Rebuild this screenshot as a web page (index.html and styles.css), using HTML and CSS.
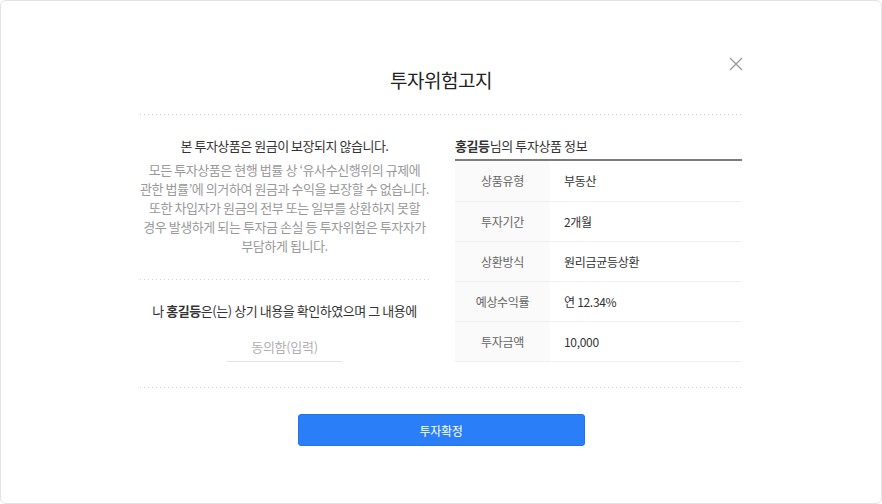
FILE: index.html
```html
<!DOCTYPE html>
<html>
	<head>
		<meta charset="utf-8" />
		<title>투자위험고지</title>
		<link rel="stylesheet" href="styles.css">
	</head>
	<body>
		<div class="modal">
			<a href="#" class="close" title="닫기">
				<svg width="14" height="14" viewBox="0 0 14 14"><path d="M1 1L13 13M13 1L1 13" stroke="#9a9a9a" stroke-width="1.3" fill="none"/></svg>
			</a>
			<h1 class="title">투자위험고지</h1>
			<div class="dots"></div>

			<div class="content">
				<div class="notice">
					<p class="notice-head">본 투자상품은 원금이 보장되지 않습니다.</p>
					<p class="notice-desc">모든 투자상품은 현행 법률 상 ‘유사수신행위의 규제에<br>관한 법률’에 의거하여 원금과 수익을 보장할 수 없습니다.<br>또한 차입자가 원금의 전부 또는 일부를 상환하지 못할<br>경우 발생하게 되는 투자금 손실 등 투자위험은 투자자가<br>부담하게 됩니다.</p>
					<div class="dots"></div>
					<p class="agree">나 <b>홍길등</b>은(는) 상기 내용을 확인하였으며 그 내용에</p>
					<input type="text" class="agree-input" placeholder="동의함(입력)">
				</div>

				<div class="info">
					<p class="info-head"><b>홍길등</b>님의 투자상품 정보</p>
					<table>
						<tr><th>상품유형</th><td>부동산</td></tr>
						<tr><th>투자기간</th><td>2개월</td></tr>
						<tr><th>상환방식</th><td>원리금균등상환</td></tr>
						<tr><th>예상수익률</th><td>연 12.34%</td></tr>
						<tr><th>투자금액</th><td>10,000</td></tr>
					</table>
				</div>
			</div>

			<div class="dots"></div>
			<div class="btns">
				<button type="button" class="btn-confirm">투자확정</button>
			</div>
		</div>
	</body>
</html>
```

FILE: styles.css
```css
*{
	margin: 0;
	padding: 0;
	box-sizing: border-box;
}
body{
	font-family: "Noto Sans CJK KR", "Noto Sans", sans-serif;
	color: #333;
	background: #fff;
}
.modal{
	position: relative;
	width: 882px;
	height: 504px;
	border: 1px solid #e3e3e3;
	border-radius: 6px;
	padding: 65px 139px 0;
	background: #fff;
}
.close{
	position: absolute;
	top: 56px;
	right: 138px;
	width: 14px;
	height: 14px;
	display: block;
}
.close svg{
	display: block;
}
.title{
	font-size: 19px;
	font-weight: normal;
	line-height: 28px;
	text-align: center;
	color: #222;
	letter-spacing: -0.5px;
	margin-bottom: 20px;
}
.dots{
	height: 1px;
	background-image: linear-gradient(to right, #d4d4d4 1px, transparent 1px);
	background-size: 4px 1px;
}
.content{
	display: flex;
	justify-content: space-between;
	padding: 21px 0 25px;
}
.notice{
	width: 289px;
	text-align: center;
}
.notice-head{
	font-size: 13px;
	line-height: 20px;
	color: #333;
	letter-spacing: -0.48px;
	margin-bottom: 4px;
}
.notice-desc{
	font-size: 13px;
	line-height: 19px;
	color: #999;
	letter-spacing: -0.43px;
	white-space: nowrap;
	margin-bottom: 24px;
}
.agree{
	margin-top: 21px;
	font-size: 13px;
	line-height: 20px;
	letter-spacing: -0.45px;
	white-space: nowrap;
}
.agree b{
	font-weight: bold;
}
.agree-input{
	display: block;
	width: 115px;
	height: 31px;
	margin: 10px auto 0;
	border: 0;
	border-bottom: 1px solid #e2e2e2;
	outline: none;
	font-family: inherit;
	font-size: 13px;
	text-align: center;
	color: #333;
	letter-spacing: -0.3px;
}
.agree-input::placeholder{
	color: #b0b0b0;
}
.info{
	width: 287px;
}
.info-head{
	font-size: 13px;
	line-height: 20px;
	letter-spacing: -0.4px;
	padding-bottom: 3px;
	border-bottom: 2px solid #7d7d7d;
}
.info table{
	width: 100%;
	border-collapse: collapse;
}
.info th,
.info td{
	height: 40px;
	font-size: 12px;
	font-weight: normal;
	border-bottom: 1px solid #f0f0f0;
	letter-spacing: -0.3px;
}
.info th{
	width: 95px;
	background: #fafafa;
	color: #666;
	text-align: center;
}
.info td{
	padding-left: 14px;
	color: #333;
	text-align: left;
}
.btns{
	padding-top: 26px;
	text-align: center;
}
.btn-confirm{
	width: 287px;
	height: 32px;
	border: 1px solid #1f74f2;
	border-radius: 3px;
	background: #2a7ff9;
	color: #fff;
	font-family: inherit;
	font-size: 12px;
	letter-spacing: -0.3px;
	cursor: pointer;
}
```
